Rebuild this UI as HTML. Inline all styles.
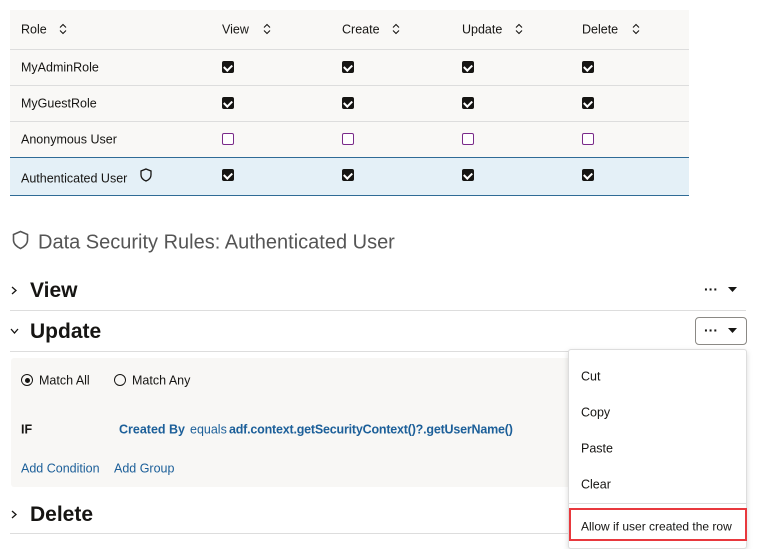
<!DOCTYPE html><html><head><style>
*{margin:0;padding:0;box-sizing:border-box}
body{width:761px;height:541px;background:#fff;font-family:"Liberation Sans",sans-serif;color:#161513;position:relative;overflow:hidden;font-size:12px}
.a{position:absolute;white-space:nowrap}
.cb{position:absolute;width:12px;height:12px;background:#161513;border-radius:2px}
.cb::after{content:"";position:absolute;left:3px;top:2px;width:4px;height:6px;border:solid #fff;border-width:0 2px 2px 0;transform:rotate(45deg)}
.ue{position:absolute;width:12px;height:12px;border:1px solid #7a2a8a;border-radius:2px;background:#fff}
.ln{position:absolute;height:1px;background:#ddd}
.t{font-size:12.5px;transform:translateY(-45%)}
.h{font-size:21px;font-weight:bold;transform:translateY(-45%)}
.blue{color:#1c5f99}
</style></head><body>
<div class="a" style="left:10px;top:10px;width:679px;height:147px;background:#f9f8f6"></div>
<div class="a" style="left:10px;top:157px;width:679px;height:38px;background:#e4f0f7"></div>
<div class="ln" style="left:10px;top:49px;width:679px"></div>
<div class="ln" style="left:10px;top:85px;width:679px"></div>
<div class="ln" style="left:10px;top:121px;width:679px"></div>
<div class="ln" style="left:10px;top:157px;width:679px;background:#2f6b96"></div>
<div class="ln" style="left:10px;top:195px;width:679px;background:#2f6b96"></div>
<svg width="0" height="0" style="position:absolute"><defs><symbol id="s" viewBox="0 0 8 12"><path d="M1 4.5L4 1.5L7 4.5M1 7.5L4 10.5L7 7.5" fill="none" stroke="#161513" stroke-width="1.1"/></symbol></defs></svg>
<div class="a t" style="left:21px;top:29px">Role</div><svg class="a" style="left:59px;top:23px" width="8" height="12"><use href="#s"/></svg>
<div class="a t" style="left:222px;top:29px">View</div><svg class="a" style="left:263px;top:23px" width="8" height="12"><use href="#s"/></svg>
<div class="a t" style="left:342px;top:29px">Create</div><svg class="a" style="left:392px;top:23px" width="8" height="12"><use href="#s"/></svg>
<div class="a t" style="left:462px;top:29px">Update</div><svg class="a" style="left:515px;top:23px" width="8" height="12"><use href="#s"/></svg>
<div class="a t" style="left:582px;top:29px">Delete</div><svg class="a" style="left:632px;top:23px" width="8" height="12"><use href="#s"/></svg>
<div class="a t" style="left:21px;top:67px">MyAdminRole</div>
<div class="a t" style="left:21px;top:103px">MyGuestRole</div>
<div class="a t" style="left:21px;top:139px">Anonymous User</div>
<div class="a t" style="left:21px;top:178px">Authenticated User</div>
<svg class="a" style="left:140px;top:168px" width="12" height="14" viewBox="0 0 12 14"><path d="M6 1 L11 3 V7 C11 10 8.5 12 6 13 C3.5 12 1 10 1 7 V3 Z" fill="none" stroke="#161513" stroke-width="1.3"/></svg>
<div class="cb" style="left:222px;top:61px"></div><div class="cb" style="left:342px;top:61px"></div><div class="cb" style="left:462px;top:61px"></div><div class="cb" style="left:582px;top:61px"></div>
<div class="cb" style="left:222px;top:97px"></div><div class="cb" style="left:342px;top:97px"></div><div class="cb" style="left:462px;top:97px"></div><div class="cb" style="left:582px;top:97px"></div>
<div class="ue" style="left:222px;top:133px"></div><div class="ue" style="left:342px;top:133px"></div><div class="ue" style="left:462px;top:133px"></div><div class="ue" style="left:582px;top:133px"></div>
<div class="cb" style="left:222px;top:169px"></div><div class="cb" style="left:342px;top:169px"></div><div class="cb" style="left:462px;top:169px"></div><div class="cb" style="left:582px;top:169px"></div>
<svg class="a" style="left:12px;top:230px" width="17" height="20" viewBox="0 0 17 20"><path d="M8.5 1.5 L15.5 4.5 V10 C15.5 14 12 17 8.5 18.5 C5 17 1.5 14 1.5 10 V4.5 Z" fill="none" stroke="#555" stroke-width="1.6"/></svg>
<div class="a" style="left:38px;top:243px;transform:translateY(-50%);font-size:20px;color:#555">Data Security Rules: Authenticated User</div>
<svg class="a" style="left:11px;top:286px" width="6" height="9"><path d="M1 1L5 4.5L1 8" fill="none" stroke="#161513" stroke-width="1.3"/></svg>
<div class="a h" style="left:30px;top:290px">View</div>
<div class="a" style="left:704px;top:281px;font-size:14px;font-weight:bold">···</div>
<svg class="a" style="left:728px;top:287px" width="9" height="6"><path d="M0 0H9L4.5 5Z" fill="#161513"/></svg>
<div class="ln" style="left:10px;top:310px;width:736px"></div>
<svg class="a" style="left:10px;top:328px" width="9" height="6"><path d="M1 1L4.5 5L8 1" fill="none" stroke="#161513" stroke-width="1.3"/></svg>
<div class="a h" style="left:30px;top:331px">Update</div>
<div class="a" style="left:695px;top:317px;width:52px;height:28px;border:1px solid #8b8985;border-radius:4px"></div>
<div class="a" style="left:704px;top:322px;font-size:14px;font-weight:bold">···</div>
<svg class="a" style="left:728px;top:328px" width="9" height="6"><path d="M0 0H9L4.5 5Z" fill="#161513"/></svg>
<div class="ln" style="left:10px;top:351px;width:736px"></div>
<div class="a" style="left:11px;top:358px;width:570px;height:129px;background:#f8f7f5;border-radius:3px"></div>
<div class="a" style="left:21px;top:374px;width:12px;height:12px;border:1px solid #161513;border-radius:50%"></div>
<div class="a" style="left:24.5px;top:377.5px;width:5px;height:5px;background:#161513;border-radius:50%"></div>
<div class="a t" style="left:39px;top:380px">Match All</div>
<div class="a" style="left:114px;top:374px;width:12px;height:12px;border:1px solid #161513;border-radius:50%"></div>
<div class="a t" style="left:132px;top:380px">Match Any</div>
<div class="a t" style="left:21px;top:429px;font-weight:bold">IF</div>
<div class="a t blue" style="left:119px;top:429px;font-weight:bold">Created By</div>
<div class="a t blue" style="left:190px;top:429px">equals</div>
<div class="a t blue" style="left:229px;top:429px;font-weight:bold;letter-spacing:-0.2px">adf.context.getSecurityContext()?.getUserName()</div>
<div class="a t blue" style="left:21px;top:468px">Add Condition</div>
<div class="a t blue" style="left:114px;top:468px">Add Group</div>
<svg class="a" style="left:11px;top:510px" width="6" height="9"><path d="M1 1L5 4.5L1 8" fill="none" stroke="#161513" stroke-width="1.3"/></svg>
<div class="a h" style="left:30px;top:514px">Delete</div>
<div class="ln" style="left:10px;top:533px;width:736px"></div>
<div class="a" style="left:568px;top:349px;width:179px;height:200px;background:#fff;border:1px solid #ddd;border-radius:3px;box-shadow:0 2px 6px rgba(0,0,0,.15)"></div>
<div class="a t" style="left:581px;top:376px">Cut</div>
<div class="a t" style="left:581px;top:412px">Copy</div>
<div class="a t" style="left:581px;top:448px">Paste</div>
<div class="a t" style="left:581px;top:484px">Clear</div>
<div class="ln" style="left:569px;top:503px;width:177px"></div>
<div class="a" style="left:569px;top:508px;width:178px;height:33px;border:2px solid #e8383d;background:#fff"></div>
<div class="a t" style="left:581px;top:526px;font-size:12px">Allow if user created the row</div>
</body></html>
